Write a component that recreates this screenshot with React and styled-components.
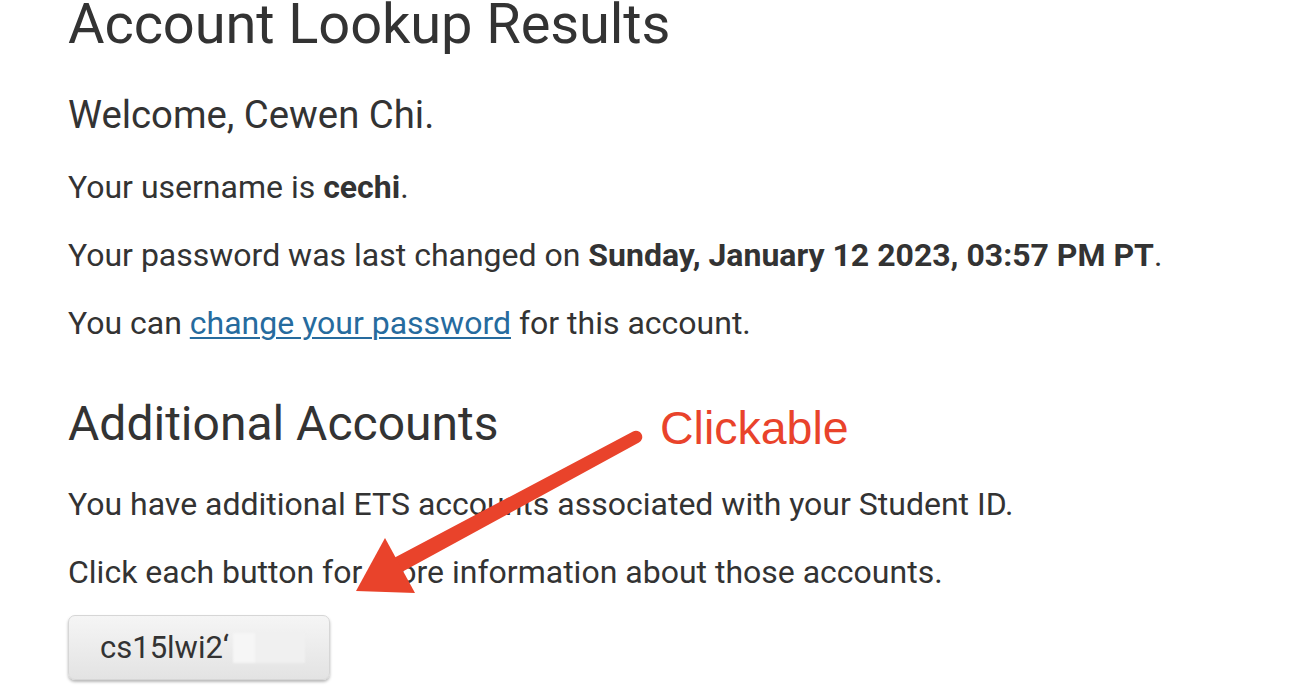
import React from "react";
import styled, { createGlobalStyle } from "styled-components";

const Global = createGlobalStyle`
  html, body { margin: 0; padding: 0; background: #fff; }
  body { font-family: Roboto, "Liberation Sans", Arial, sans-serif; color: #333; overflow: hidden; }
`;

const Page = styled.main`
  position: relative;
  width: 1290px;
  height: 696px;
  overflow: hidden;
  padding-left: 68px;
  box-sizing: border-box;
  display: flex;
  flex-direction: column;
  align-items: flex-start;
`;

const Title = styled.h1`
  margin: 0;
  font-size: 56px;
  line-height: 48px;
  font-weight: 400;
  letter-spacing: -0.1px;
`;

const Welcome = styled.h3`
  margin: 44px 0 0;
  font-size: 38.3px;
  line-height: 46px;
  font-weight: 400;
`;

const Para = styled.p`
  margin: ${(p) => p.$top ?? 24}px 0 0;
  font-size: 32px;
  line-height: 44px;
  font-weight: 400;
  white-space: nowrap;
  strong { font-weight: 700; }
`;

const Link = styled.a`
  color: #266b9e;
  text-decoration: underline;
  text-underline-offset: 3px;
  text-decoration-thickness: 2px;
`;

const Section = styled.h2`
  margin: 51px 0 0;
  font-size: 48px;
  line-height: 56px;
  font-weight: 400;
`;

const AccountButton = styled.button`
  margin-top: 21px;
  width: 262px;
  height: 65px;
  padding: 0 0 0 31px;
  display: flex;
  align-items: center;
  border: 1px solid #d6d6d6;
  border-radius: 7px;
  background: linear-gradient(#f5f5f5, #e3e3e3);
  box-shadow: 0 2px 3px rgba(0, 0, 0, 0.28);
  font-family: Roboto, sans-serif;
  font-size: 31px;
  color: #333;
  cursor: pointer;
`;

const Redacted = styled.span`
  display: inline-block;
  width: 72px;
  height: 30px;
  margin-left: 4px;
  background: linear-gradient(90deg, #f6f6f6 0 30%, #f0f0f0 30% 100%);
  filter: blur(1px);
`;

const Annotation = styled.div`
  position: absolute;
  left: 0;
  top: 0;
  width: 1290px;
  height: 696px;
  pointer-events: none;
`;

const Note = styled.span`
  position: absolute;
  left: 660px;
  top: 402px;
  font-family: "Liberation Sans", Arial, sans-serif;
  font-size: 46.5px;
  line-height: 52px;
  color: #e9432b;
`;

export default function App() {
  return (
    <>
      <Global />
      <Page>
        <Title>Account Lookup Results</Title>
        <Welcome>Welcome, Cewen Chi.</Welcome>
        <Para $top={27}>
          Your username is <strong>cechi</strong>.
        </Para>
        <Para>
          Your password was last changed on{" "}
          <strong>Sunday, January 12 2023, 03:57 PM PT</strong>.
        </Para>
        <Para>
          You can <Link href="#">change your password</Link> for this account.
        </Para>
        <Section>Additional Accounts</Section>
        <Para $top={30}>You have additional ETS accounts associated with your Student ID.</Para>
        <Para>Click each button for more information about those accounts.</Para>
        <AccountButton>
          cs15lwi2‘<Redacted />
        </AccountButton>
        <Annotation>
          <svg width="1290" height="696" viewBox="0 0 1290 696">
            <path
              d="M392 559 L633 431.5 A6.2 6.2 0 0 1 639 442.5 L400 573 Z"
              fill="#e9432b"
            />
            <polygon points="356,591 385,538 415,593" fill="#e9432b" />
          </svg>
          <Note>Clickable</Note>
        </Annotation>
      </Page>
    </>
  );
}
